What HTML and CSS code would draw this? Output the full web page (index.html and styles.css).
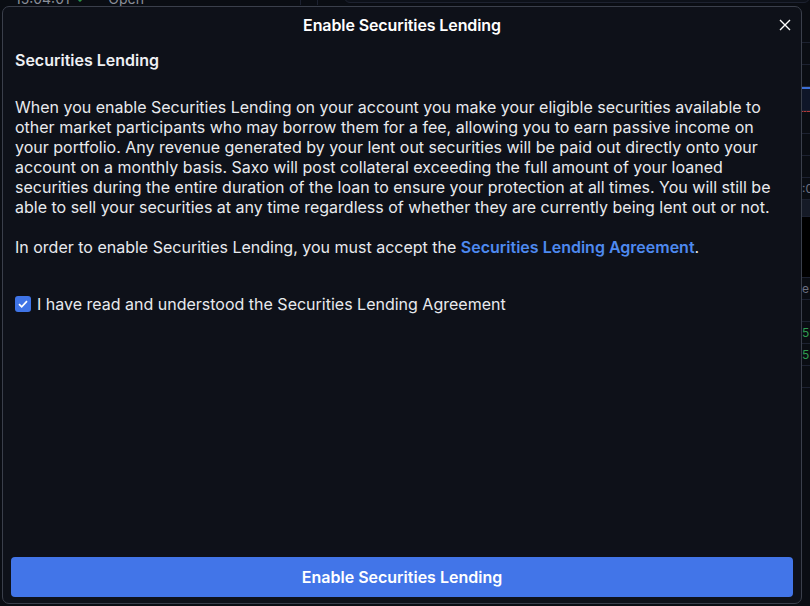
FILE: index.html
```html
<!DOCTYPE html>
<html>
<head>
<meta charset="utf-8">
<link rel="stylesheet" href="styles.css">
</head>
<body>

<div class="app">
	<div class="app-top">
		<span class="time">15:04:01</span>
		<span class="ok">&#10003;</span>
		<span class="dot"></span>
		<span class="state">Open</span>
		<span class="sep"></span>
		<span class="sep"></span>
		<span class="topbox"></span>
	</div>
	<div class="app-side">
		<div class="row"></div>
		<div class="row"></div>
		<div class="row"></div>
		<div class="row chart"></div>
		<div class="row dash"></div>
		<div class="row"></div>
		<div class="row"></div>
		<div class="row label">:0</div>
		<div class="row dark"></div>
		<div class="row dark2"></div>
		<div class="row label">e</div>
		<div class="row"></div>
		<div class="row green">5</div>
		<div class="row green">5</div>
		<div class="row"></div>
	</div>
</div>

<div class="modal">
	<div class="modal-head">
		<span class="modal-title">Enable Securities Lending</span>
		<button class="close" aria-label="Close">
			<svg width="12" height="12" viewBox="0 0 12 12"><path d="M1 1L11 11M11 1L1 11" stroke="#fff" stroke-width="1.4" fill="none"/></svg>
		</button>
	</div>
	<div class="modal-body">
		<h3>Securities Lending</h3>
		<p>When you enable Securities Lending on your account you make your eligible securities available to other market participants who may borrow them for a fee, allowing you to earn passive income on your portfolio. Any revenue generated by your lent out securities will be paid out directly onto your account on a monthly basis. Saxo will post collateral exceeding the full amount of your loaned securities during the entire duration of the loan to ensure your protection at all times. You will still be able to sell your securities at any time regardless of whether they are currently being lent out or not.</p>
		<p>In order to enable Securities Lending, you must accept the <a href="#">Securities Lending Agreement</a>.</p>
		<label class="check">
			<span class="box"><svg width="10" height="8" viewBox="0 0 10 8"><path d="M1 4.2L3.7 6.8L9 1.2" stroke="#fff" stroke-width="1.7" fill="none"/></svg></span>
			I have read and understood the Securities Lending Agreement
		</label>
	</div>
	<div class="modal-foot">
		<button class="primary">Enable Securities Lending</button>
	</div>
</div>

</body>
</html>
```

FILE: styles.css
```css
body {
	margin: 0;
	background-color: #0a0d13;
	font-family: Inter, "Liberation Sans", sans-serif;
	color: #e8eaee;
	height: 606px;
	overflow: hidden;
}

/* app behind the dialog */
.app {
	height: 606px;
	position: relative;
}
.app-top {
	display: flex;
	align-items: center;
	height: 14px;
	margin-top: -9px;
	padding-left: 15px;
	font-size: 14px;
	color: #8a8f99;
	gap: 6px;
}
.app-top .ok {
	color: #2e9a4f;
	font-size: 12px;
}
.app-top .dot {
	width: 4px;
	height: 4px;
	border-radius: 50%;
	background-color: #2e9a4f;
	margin-left: 6px;
}
.app-top .sep {
	width: 1px;
	height: 14px;
	background-color: #1c2130;
	margin-left: 150px;
}
.app-top .sep + .sep {
	margin-left: 10px;
}
.app-top .topbox {
	flex: 1;
	height: 14px;
	margin-left: 20px;
	margin-top: -6px;
	border: 1px solid #1d2230;
	border-radius: 6px;
	background-color: #0d1119;
}
.app-side {
	position: absolute;
	right: 0;
	top: 30px;
	width: 10px;
	display: flex;
	flex-direction: column;
	border-left: 1px solid #222736;
}
.app-side .row {
	height: 21px;
	border-bottom: 1px solid #1c2130;
	font-size: 12px;
	color: #6b7080;
	line-height: 21px;
	padding-left: 2px;
}
.app-side .chart {
	border-top: 2px solid #3c6fd6;
	background-color: #0f1628;
}
.app-side .dash {
	border-top: 1px dashed #b03a3a;
}
.app-side .dark {
	background-color: #151a26;
	height: 16px;
}
.app-side .dark2 {
	background-color: #000;
	height: 60px;
}
.app-side .green {
	color: #2e9a4f;
}

/* dialog */
.modal {
	position: absolute;
	left: 2px;
	top: 6px;
	width: 798px;
	height: 596px;
	background-color: #0e1119;
	border: 1px solid #3a3f4b;
	border-radius: 7px;
	display: flex;
	flex-direction: column;
}
.modal-head {
	height: 35px;
	display: flex;
	align-items: center;
	justify-content: center;
	position: relative;
}
.modal-title {
	font-size: 16px;
	font-weight: 600;
	color: #fff;
	letter-spacing: -0.1px;
}
.close {
	position: absolute;
	right: 9px;
	top: 11px;
	width: 14px;
	height: 14px;
	padding: 0;
	border: 0;
	background: none;
	display: flex;
	align-items: center;
	justify-content: center;
}
.modal-body {
	flex: 1;
	padding: 8px 12px 0 12px;
}
.modal-body h3 {
	margin: 0 0 27px 0;
	font-size: 16px;
	font-weight: 600;
	line-height: 20px;
	color: #eef0f3;
}
.modal-body p {
	margin: 0 0 20px 0;
	font-size: 16px;
	line-height: 20px;
}
.modal-body a {
	color: #4e8af0;
	font-weight: 600;
	text-decoration: none;
}
.check {
	display: flex;
	align-items: center;
	gap: 6px;
	margin-top: 37px;
	font-size: 16px;
	line-height: 20px;
}
.box {
	width: 16px;
	height: 16px;
	border-radius: 3px;
	background-color: #3f74e6;
	display: flex;
	align-items: center;
	justify-content: center;
}
.modal-foot {
	padding: 0 8px 6px 8px;
}
.primary {
	width: 100%;
	height: 40px;
	border: 0;
	border-radius: 4px;
	background-color: #4275e8;
	color: #fff;
	font-family: Inter, "Liberation Sans", sans-serif;
	font-size: 16px;
	font-weight: 600;
}
```
